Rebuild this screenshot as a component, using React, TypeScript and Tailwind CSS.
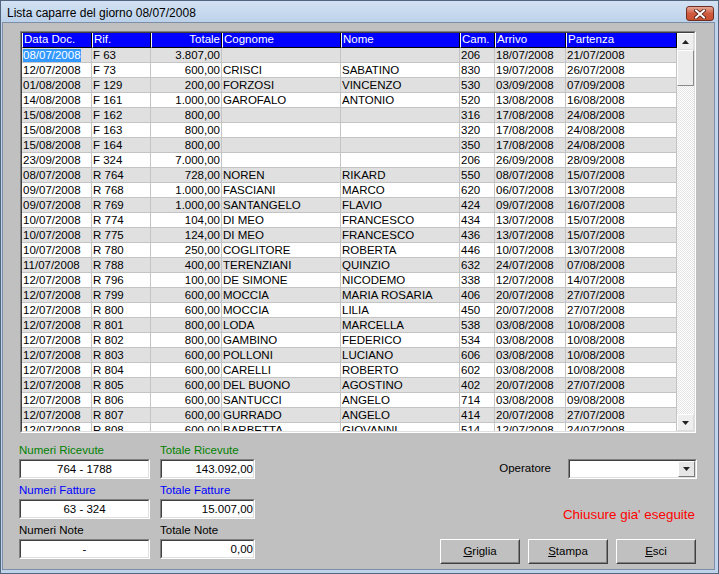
import React from 'react';

const cols = [
    { label: 'Data Doc.', w: 'w-[70px]', right: false },
    { label: 'Rif.', w: 'w-[59px]', right: false },
    { label: 'Totale', w: 'w-[71px]', right: true },
    { label: 'Cognome', w: 'w-[119px]', right: false },
    { label: 'Nome', w: 'w-[119px]', right: false },
    { label: 'Cam.', w: 'w-[35px]', right: false },
    { label: 'Arrivo', w: 'w-[71px]', right: false },
    { label: 'Partenza', w: 'w-[111px]', right: false },
];

const rows = [
    ['08/07/2008', 'F 63', '3.807,00', '', '', '206', '18/07/2008', '21/07/2008'],
    ['12/07/2008', 'F 73', '600,00', 'CRISCI', 'SABATINO', '830', '19/07/2008', '26/07/2008'],
    ['01/08/2008', 'F 129', '200,00', 'FORZOSI', 'VINCENZO', '530', '03/09/2008', '07/09/2008'],
    ['14/08/2008', 'F 161', '1.000,00', 'GAROFALO', 'ANTONIO', '520', '13/08/2008', '16/08/2008'],
    ['15/08/2008', 'F 162', '800,00', '', '', '316', '17/08/2008', '24/08/2008'],
    ['15/08/2008', 'F 163', '800,00', '', '', '320', '17/08/2008', '24/08/2008'],
    ['15/08/2008', 'F 164', '800,00', '', '', '350', '17/08/2008', '24/08/2008'],
    ['23/09/2008', 'F 324', '7.000,00', '', '', '206', '26/09/2008', '28/09/2008'],
    ['08/07/2008', 'R 764', '728,00', 'NOREN', 'RIKARD', '550', '08/07/2008', '15/07/2008'],
    ['09/07/2008', 'R 768', '1.000,00', 'FASCIANI', 'MARCO', '620', '06/07/2008', '13/07/2008'],
    ['09/07/2008', 'R 769', '1.000,00', 'SANTANGELO', 'FLAVIO', '424', '09/07/2008', '16/07/2008'],
    ['10/07/2008', 'R 774', '104,00', 'DI MEO', 'FRANCESCO', '434', '13/07/2008', '15/07/2008'],
    ['10/07/2008', 'R 775', '124,00', 'DI MEO', 'FRANCESCO', '436', '13/07/2008', '15/07/2008'],
    ['10/07/2008', 'R 780', '250,00', 'COGLITORE', 'ROBERTA', '446', '10/07/2008', '13/07/2008'],
    ['11/07/2008', 'R 788', '400,00', 'TERENZIANI', 'QUINZIO', '632', '24/07/2008', '07/08/2008'],
    ['12/07/2008', 'R 796', '100,00', 'DE SIMONE', 'NICODEMO', '338', '12/07/2008', '14/07/2008'],
    ['12/07/2008', 'R 799', '600,00', 'MOCCIA', 'MARIA ROSARIA', '406', '20/07/2008', '27/07/2008'],
    ['12/07/2008', 'R 800', '600,00', 'MOCCIA', 'LILIA', '450', '20/07/2008', '27/07/2008'],
    ['12/07/2008', 'R 801', '800,00', 'LODA', 'MARCELLA', '538', '03/08/2008', '10/08/2008'],
    ['12/07/2008', 'R 802', '800,00', 'GAMBINO', 'FEDERICO', '534', '03/08/2008', '10/08/2008'],
    ['12/07/2008', 'R 803', '600,00', 'POLLONI', 'LUCIANO', '606', '03/08/2008', '10/08/2008'],
    ['12/07/2008', 'R 804', '600,00', 'CARELLI', 'ROBERTO', '602', '03/08/2008', '10/08/2008'],
    ['12/07/2008', 'R 805', '600,00', 'DEL BUONO', 'AGOSTINO', '402', '20/07/2008', '27/07/2008'],
    ['12/07/2008', 'R 806', '600,00', 'SANTUCCI', 'ANGELO', '714', '03/08/2008', '09/08/2008'],
    ['12/07/2008', 'R 807', '600,00', 'GURRADO', 'ANGELO', '414', '20/07/2008', '27/07/2008'],
    ['12/07/2008', 'R 808', '600,00', 'BARBETTA', 'GIOVANNI', '514', '12/07/2008', '24/07/2008'],
];

function Arrow({ down }: { down?: boolean }) {
    return (
        <svg width="7" height="4" viewBox="0 0 7 4">
            <path d={down ? 'M0 0H7L3.5 4Z' : 'M0 4H7L3.5 0Z'} fill="#222" />
        </svg>
    );
}

// sunken white field, classic win32 look
function Field({ value, align, w }: { value: string; align: 'center' | 'right'; w: string }) {
    return (
        <div className={`${w} h-[20px] border border-t-[#808080] border-l-[#808080] border-r-white border-b-white`}>
            <div
                className={`h-full bg-white border border-t-[#404040] border-l-[#404040] border-r-[#dfdfdf] border-b-[#dfdfdf] text-[11.5px] leading-[16px] ${align === 'center' ? 'text-center' : 'text-right'}`}
            >
                {value}
            </div>
        </div>
    );
}

function Btn({ first, rest }: { first: string; rest: string }) {
    return (
        <button className="w-[80px] h-[25px] border border-t-white border-l-white border-r-[#404040] border-b-[#404040] bg-[#c0c0c0]">
            <div className="h-full border border-transparent border-r-[#808080] border-b-[#808080] text-[11.5px] leading-[21px] text-black">
                <span className="underline">{first}</span>
                {rest}
            </div>
        </button>
    );
}

export default function App() {
    return (
        <div className="w-[719px] h-[574px] flex flex-col bg-[#bfd4eb] border border-[#53657c] font-['Liberation_Sans',Arial,sans-serif] text-black select-none">
            {/* Title bar */}
            <div className="h-[21px] flex items-center bg-gradient-to-b from-[#d3e2f3] to-[#bcd2ea]">
                <span className="pl-[6px] pt-[2px] text-[12px] text-black">Lista caparre del giorno 08/07/2008</span>
                <div className="ml-auto mr-[4px] mt-[4px] w-[28px] h-[15px] rounded-[3px] border border-[#6f2d22] bg-gradient-to-b from-[#e7a999] via-[#cf5b3f] to-[#c9502f] flex items-center justify-center">
                    <svg width="12" height="10" viewBox="0 0 12 10">
                        <path d="M2 1.5L10 8.5M10 1.5L2 8.5" stroke="#4a1a12" strokeWidth="3.6" strokeLinecap="square" />
                        <path d="M2 1.5L10 8.5M10 1.5L2 8.5" stroke="#fff" strokeWidth="2" strokeLinecap="square" />
                    </svg>
                </div>
            </div>

            {/* Body */}
            <div className="flex-1 mx-[1px] mb-[3px] mr-[3px] border border-[#7d8fa6] bg-[#c0c0c0] pl-[16px] pr-[17px] pt-[8px]">
                {/* Grid */}
                <div className="ml-[1px] w-[676px] h-[402px] border border-t-[#808080] border-l-[#808080] border-r-white border-b-white">
                    <div className="h-full flex border border-t-[#404040] border-l-[#404040] border-r-[#dfdfdf] border-b-[#dfdfdf] bg-white">
                        <div className="w-[655px] h-full overflow-hidden text-[11.5px]">
                            <div className="flex h-[15px]">
                                {cols.map(c => (
                                    <div
                                        key={c.label}
                                        className={`${c.w} shrink-0 bg-[#0000ff] text-white border-l border-l-white border-r border-r-black border-b border-b-black leading-[13px] px-[1px] ${c.right ? 'text-right' : 'text-left'}`}
                                    >
                                        {c.label}
                                    </div>
                                ))}
                            </div>
                            {rows.map((r, i) => (
                                <div key={i} className={`flex h-[15px] ${i % 2 === 0 ? 'bg-[#e0e0e0]' : 'bg-white'}`}>
                                    {r.map((v, j) => (
                                        <div
                                            key={j}
                                            className={`${cols[j].w} shrink-0 border-r border-b border-[#c4c4c4] leading-[14px] px-[1px] whitespace-nowrap overflow-hidden ${cols[j].right ? 'text-right' : 'text-left'}`}
                                        >
                                            {i === 0 && j === 0 ? (
                                                <span className="bg-[#3399ff] text-white inline-block leading-[13px]">{v}</span>
                                            ) : (
                                                v
                                            )}
                                        </div>
                                    ))}
                                </div>
                            ))}
                        </div>

                        {/* Scrollbar */}
                        <div className="w-[17px] h-full flex flex-col bg-[repeating-conic-gradient(#ffffff_0%_25%,#e4e4e4_0%_50%)] bg-[length:2px_2px]">
                            <div className="h-[17px] flex items-center justify-center bg-[#eeeeee] border border-t-white border-l-white border-r-[#dcdcdc] border-b-[#dcdcdc]">
                                <Arrow />
                            </div>
                            <div className="h-[36px] bg-[#ececec] border border-t-white border-l-white border-r-[#8a8a8a] border-b-[#8a8a8a]" />
                            <div className="flex-1" />
                            <div className="h-[17px] flex items-center justify-center bg-[#eeeeee] border border-t-white border-l-white border-r-[#dcdcdc] border-b-[#dcdcdc]">
                                <Arrow down />
                            </div>
                        </div>
                    </div>
                </div>

                {/* Bottom section */}
                <div className="mt-[11px] flex justify-between">
                    <div className="flex gap-[10px]">
                        <div className="flex flex-col">
                            <span className="h-[13px] leading-[13px] text-[11.5px] text-[#008000]">Numeri Ricevute</span>
                            <div className="mt-[2px]"><Field value="764 - 1788" align="center" w="w-[131px]" /></div>
                            <span className="mt-[5px] h-[13px] leading-[13px] text-[11.5px] text-[#0000ff]">Numeri Fatture</span>
                            <div className="mt-[2px]"><Field value="63 - 324" align="center" w="w-[131px]" /></div>
                            <span className="mt-[5px] h-[13px] leading-[13px] text-[11.5px]">Numeri Note</span>
                            <div className="mt-[2px]"><Field value="-" align="center" w="w-[131px]" /></div>
                        </div>
                        <div className="flex flex-col">
                            <span className="h-[13px] leading-[13px] text-[11.5px] text-[#008000]">Totale Ricevute</span>
                            <div className="mt-[2px]"><Field value="143.092,00" align="right" w="w-[95px]" /></div>
                            <span className="mt-[5px] h-[13px] leading-[13px] text-[11.5px] text-[#0000ff]">Totale Fatture</span>
                            <div className="mt-[2px]"><Field value="15.007,00" align="right" w="w-[95px]" /></div>
                            <span className="mt-[5px] h-[13px] leading-[13px] text-[11.5px]">Totale Note</span>
                            <div className="mt-[2px]"><Field value="0,00" align="right" w="w-[95px]" /></div>
                        </div>
                    </div>

                    <div className="flex flex-col items-end pt-[15px]">
                        <div className="flex items-center gap-[17px]">
                            <span className="text-[11.5px]">Operatore</span>
                            <div className="w-[129px] h-[20px] border border-t-[#808080] border-l-[#808080] border-r-white border-b-white">
                                <div className="h-full flex justify-end bg-white border border-t-[#404040] border-l-[#404040] border-r-[#dfdfdf] border-b-[#dfdfdf]">
                                    <div className="w-[17px] h-full flex items-center justify-center bg-[#e6e6e6] border border-t-white border-l-white border-r-[#7a7a7a] border-b-[#7a7a7a]">
                                        <Arrow down />
                                    </div>
                                </div>
                            </div>
                        </div>
                        <span className="mt-[28px] mr-[2px] h-[16px] leading-[16px] text-[13.4px] text-[#ff0000]">Chiusure gia' eseguite</span>
                        <div className="mt-[16px] mr-[1px] flex gap-[8px]">
                            <Btn first="G" rest="riglia" />
                            <Btn first="S" rest="tampa" />
                            <Btn first="E" rest="sci" />
                        </div>
                    </div>
                </div>
            </div>
        </div>
    );
}
